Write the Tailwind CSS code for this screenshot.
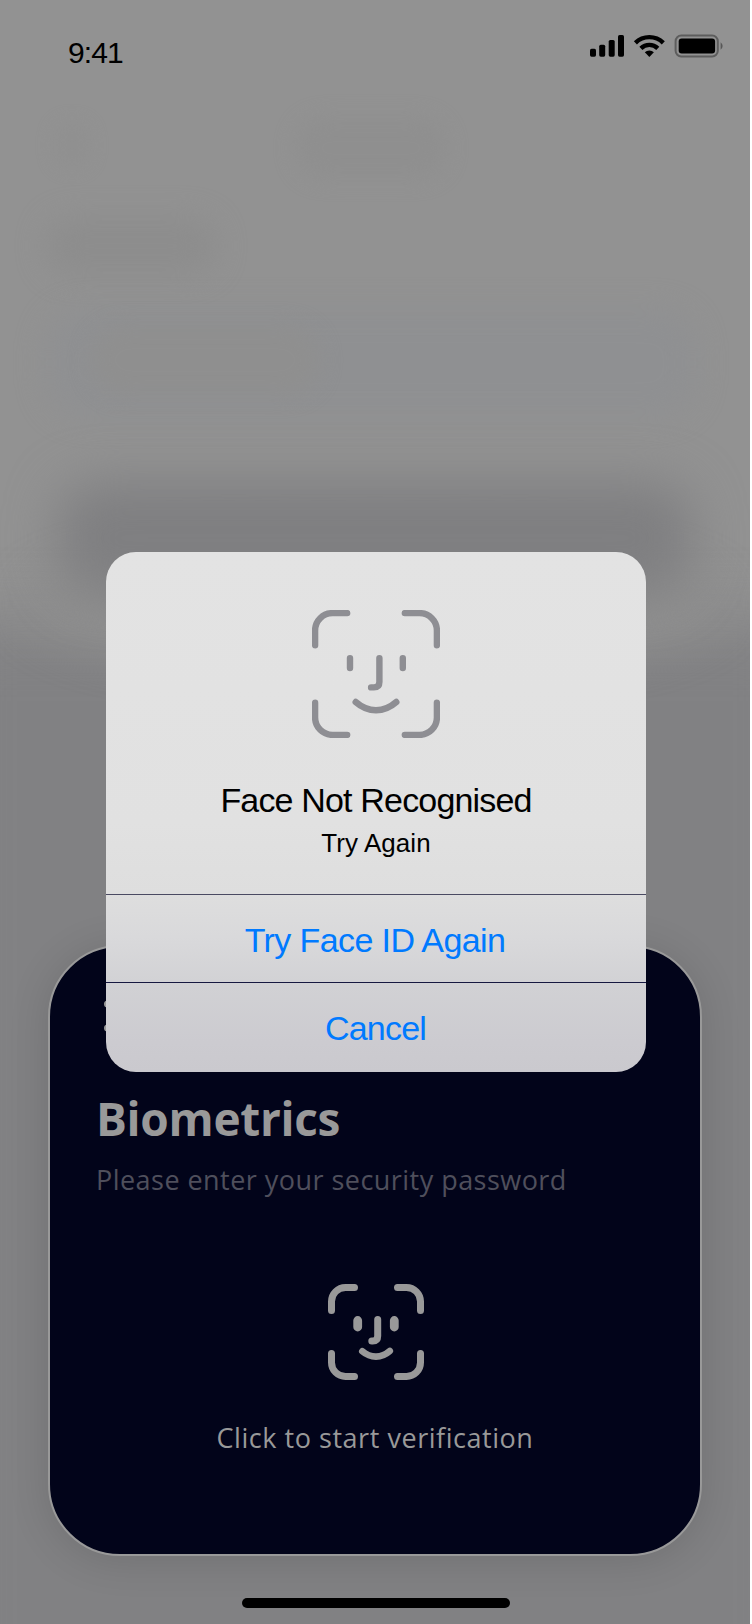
<!DOCTYPE html>
<html lang="en">
<head>
<meta charset="utf-8">
<title>Biometrics</title>
<script src="https://cdn.jsdelivr.net/npm/@tailwindcss/browser@4"></script>
</head>
<body class="bg-white font-['Liberation_Sans',sans-serif]">
<main class="relative flex h-[1624px] w-[750px] flex-col items-center overflow-hidden bg-[#929292]">
  <!-- blurred backdrop -->
  <div class="absolute inset-0 overflow-hidden" aria-hidden="true">
    <div class="absolute left-[296px] top-[118px] h-[60px] w-[150px] rounded-full bg-[#8f8f8f] blur-[10px]"></div>
    <div class="absolute left-[54px] top-[122px] h-[46px] w-[36px] rounded-full bg-[#909090] blur-[8px]"></div>
    <div class="absolute left-[46px] top-[218px] h-[56px] w-[170px] rounded-full bg-[#8d8d8d] blur-[14px]"></div>
    <div class="absolute left-[46px] top-[310px] h-[106px] w-[650px] rounded-[40px] bg-[#8f9092] blur-[14px]"></div>
    <div class="absolute left-[90px] top-[325px] h-[70px] w-[230px] rounded-full bg-[#8f8f8f] blur-[10px]"></div>
    <div class="absolute -left-[60px] top-[624px] h-[1100px] w-[870px] bg-[#818183] blur-[32px]"></div>
    <div class="absolute left-[30px] top-[540px] h-[130px] w-[690px] rounded-[50%] bg-[#8f8f8f] blur-[22px]"></div>
    <div class="absolute left-[58px] top-[482px] h-[112px] w-[634px] rounded-[40px] bg-[#7f7f81] blur-[25px]"></div>
  </div>

  <header class="relative flex h-[945px] w-full shrink-0 items-start justify-between pl-[68px] pr-[26px]">
    <span class="mt-[35px] text-[30px] leading-[36px] tracking-[-0.9px] text-black">9:41</span>
    <svg class="mt-[34px]" width="134" height="24" viewBox="590 34 134 24" fill="#000">
      <rect x="590" y="48.7" width="6" height="8" rx="1.6"/>
      <rect x="599.2" y="44.7" width="6" height="12" rx="1.6"/>
      <rect x="608.7" y="40" width="6" height="16.7" rx="1.6"/>
      <rect x="618" y="35" width="6" height="21.7" rx="1.6"/>
      <g fill="none" stroke="#000" stroke-width="4.4">
        <path d="M635.4 42.8A20 20 0 0 1 663.3 42.8"/>
        <path d="M640.9 48.3A12.2 12.2 0 0 1 657.8 48.3"/>
      </g>
      <path d="M644.8 52.3A6.6 6.6 0 0 1 653.9 52.3L649.35 56.9Z"/>
      <rect x="675.6" y="35.6" width="42.2" height="20.8" rx="5.6" fill="none" stroke="#000" stroke-opacity=".36" stroke-width="2"/>
      <rect x="678.7" y="38.4" width="36.4" height="15" rx="3"/>
      <path d="M720.6 42.2A4.6 4.6 0 0 1 720.6 49.8Z" fill-opacity=".4"/>
    </svg>
  </header>

  <section class="relative flex h-[611px] w-[654px] shrink-0 flex-col rounded-[72px] border-2 border-[#999999] bg-[#02041a] px-[46px] pt-[53px] font-['Open_Sans','Noto_Sans',sans-serif] shadow-[0_4px_40px_rgba(0,0,0,0.13)]">
    <svg class="ml-[8px] shrink-0" width="40" height="32" viewBox="0 0 40 32" fill="#999999"><circle cx="3.5" cy="4" r="3.5"/><circle cx="3.5" cy="28" r="3.5"/></svg>
    <h1 class="mt-[56px] text-[46px] font-bold leading-[60px] tracking-[-0.3px] whitespace-nowrap text-[#999999]">Biometrics</h1>
    <p class="mt-[12px] text-[27px] leading-[40px] tracking-[0.46px] whitespace-nowrap text-[#4f4f5c]">Please enter your security password</p>
    <div class="ml-[2px] mt-[84px] flex flex-col items-center">
      <svg width="96" height="96" viewBox="0 0 96 96" fill="none" stroke="#999999" stroke-width="7" stroke-linecap="round">
        <path d="M3.5 26.5V17.5A14 14 0 0 1 17.5 3.5H26.5M69.5 3.5H78.5A14 14 0 0 1 92.5 17.5V26.5M92.5 69.5V78.5A14 14 0 0 1 78.5 92.5H69.5M26.5 92.5H17.5A14 14 0 0 1 3.5 78.5V69.5"/>
        <path stroke-width="8.8" d="M29.7 36.5V43M66.3 36.5V43"/>
        <path d="M49.7 35.5V52Q49.7 57 44.7 57H43.8"/>
        <path stroke-width="6.6" d="M34.3 67.3Q40.5 72.6 48 72.6T61.8 67"/>
      </svg>
      <p class="mr-[2px] mt-[38px] text-[27px] leading-[40px] tracking-[0.54px] whitespace-nowrap text-[#999999]">Click to start verification</p>
    </div>
  </section>

  <div class="relative mt-[42px] h-[10px] w-[268px] shrink-0 translate-x-px rounded-full bg-black"></div>

  <!-- alert over the dimmed screen -->
  <div class="absolute left-[106px] top-[552px] flex h-[520px] w-[540px] flex-col overflow-hidden rounded-[30px] bg-[linear-gradient(to_bottom,#e3e3e3_0px,#e1e1e1_270px,#dedede_341px,#d9d9db_385px,#d1d1d4_435px,#cccbd0_490px,#cac9ce_520px)]" role="dialog">
    <div class="flex h-[342px] shrink-0 flex-col items-center pt-[58px]">
      <svg class="shrink-0" width="128" height="128" viewBox="0 0 128 128" fill="none" stroke="#8e8e93" stroke-width="6.4" stroke-linecap="round">
        <path d="M3.1 35.2V20.5A17.4 17.4 0 0 1 20.5 3.1H35.2M92.8 3.1H107.5A17.4 17.4 0 0 1 124.9 20.5V35.2M124.9 92.8V107.5A17.4 17.4 0 0 1 107.5 124.9H92.8M35.2 124.9H20.5A17.4 17.4 0 0 1 3.1 107.5V92.8"/>
        <path d="M38 48.1V58M90.8 48.1V58M67.4 48.1V72Q67.4 77.4 62 77.4H59.1"/>
        <path d="M43.7 92Q53 100.2 64 100.2T84.3 92"/>
      </svg>
      <h2 class="mt-[42px] text-[34px] leading-[40px] tracking-[-0.83px] whitespace-nowrap text-black">Face Not Recognised</h2>
      <p class="mt-[7px] text-[26px] leading-[32px] tracking-[0.05px] whitespace-nowrap text-black">Try Again</p>
    </div>
    <button class="h-[88px] shrink-0 border-t border-[#4a4a62] pr-[2px] pt-[3px] text-[34px] leading-[40px] tracking-[-0.6px] text-[#007aff]">Try Face ID Again</button>
    <button class="h-[90px] shrink-0 border-t border-[#161840] pr-[1px] pt-[1px] text-[34px] leading-[40px] tracking-[-0.8px] text-[#007aff]">Cancel</button>
  </div>
</main>
</body>
</html>
